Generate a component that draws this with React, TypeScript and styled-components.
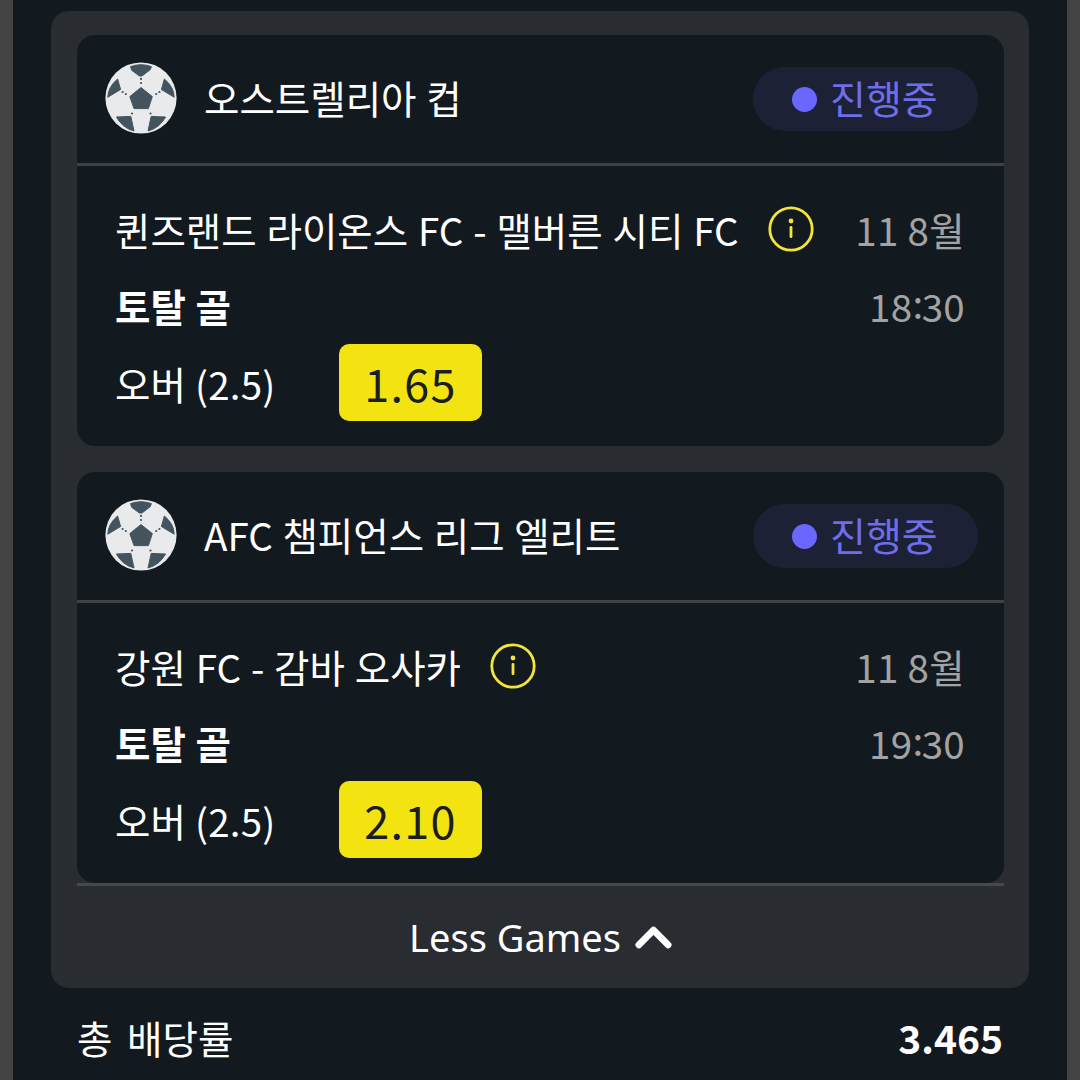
import React from "react";
import styled, { createGlobalStyle } from "styled-components";

const Global = createGlobalStyle`
  html, body { margin: 0; padding: 0; background: #131a1f; }
  body { font-family: "Noto Sans CJK KR", "Noto Sans", sans-serif; font-weight: 400; }
`;

const Page = styled.div`
  width: 1080px;
  height: 1080px;
  box-sizing: border-box;
  overflow: hidden;
  background: #131a1f;
  border-left: 13px solid #434343;
  border-right: 13px solid #434343;
  padding: 11px 38px 0;
`;

const Panel = styled.section`
  background: #292c30;
  border-radius: 18px;
  padding: 24px 25px 0 26px;
  height: 977px;
  box-sizing: border-box;
  display: flex;
  flex-direction: column;
`;

const Card = styled.article`
  background: #131a1f;
  border-radius: 18px;
  height: 411px;
  flex: none;
  display: flex;
  flex-direction: column;
  & + & { margin-top: 26px; }
`;

const CardHead = styled.header`
  height: 131px;
  flex: none;
  box-sizing: border-box;
  display: flex;
  align-items: center;
  padding: 0 26px 0 28px;
  border-bottom: 3px solid #3f4142;
`;

const Ball = styled.svg`
  width: 72px;
  height: 72px;
  flex: none;
  margin-bottom: 2px;
`;

const League = styled.h2`
  margin: 0 0 4px 27px;
  flex: 1;
  font-size: 38.5px;
  font-weight: 400;
  word-spacing: 1px;
  line-height: 56px;
  color: #fff;
  white-space: nowrap;
`;

const Status = styled.div`
  width: 225px;
  height: 64px;
  flex: none;
  border-radius: 32px;
  background: #1c2136;
  display: flex;
  align-items: center;
  padding: 0 0 4px 39px;
  box-sizing: border-box;
  gap: 13px;
  color: #6f6eea;
  font-size: 39px;
`;

const Dot = styled.span`
  width: 25px;
  height: 25px;
  margin-top: 4px;
  border-radius: 50%;
  background: #6a67ff;
`;

const Body = styled.div`
  flex: 1;
  padding: 26px 39px 0 38px;
  display: grid;
  grid-template-columns: 1fr auto;
  grid-template-rows: 74px 78px 77px;
  align-items: center;
`;

const Match = styled.div`
  display: flex;
  align-items: center;
  gap: 29px;
  font-size: 38.5px;
  word-spacing: 1.2px;
  line-height: 56px;
  color: #fff;
  white-space: nowrap;
`;

const Info = styled.svg`
  width: 46px;
  height: 46px;
  flex: none;
`;

const Muted = styled.div`
  font-size: 38.5px;
  letter-spacing: 0.3px;
  color: #a3a3a3;
  text-align: right;
  white-space: nowrap;
  line-height: 56px;
`;

const Colon = styled.span`
  vertical-align: 3px;
  line-height: 0;
  letter-spacing: -1.5px;
`;

const Market = styled.div`
  font-size: 38.5px;
  font-weight: 700;
  word-spacing: 1px;
  color: #fff;
  line-height: 56px;
`;

const OddRow = styled.div`
  display: flex;
  align-items: center;
  grid-column: 1 / span 2;
`;

const Pick = styled.div`
  width: 224px;
  font-size: 38.5px;
  letter-spacing: 0.2px;
  color: #fff;
  line-height: 56px;
`;

const Odd = styled.div`
  width: 143px;
  height: 77px;
  border-radius: 10px;
  background: #f3e411;
  color: #1a1d22;
  font-size: 45px;
  letter-spacing: 1.3px;
  display: flex;
  align-items: center;
  justify-content: center;
`;

const Rule = styled.div`
  height: 3px;
  flex: none;
  background: #46484a;
`;

const More = styled.div`
  flex: 1;
  display: flex;
  align-items: center;
  justify-content: center;
  gap: 14px;
  color: #fff;
  font-size: 38px;
  font-family: "Noto Sans", sans-serif;
`;

const Chevron = styled.svg`
  width: 37px;
  height: 26px;
`;

const Total = styled.footer`
  display: flex;
  justify-content: space-between;
  align-items: center;
  padding: 21px 26px 0 26px;
  color: #fff;
  font-size: 38.5px;
  word-spacing: 6px;
  line-height: 56px;
`;

const TotalValue = styled.strong`
  font-size: 39px;
  font-weight: 700;
`;

const BallIcon = () => (
  <Ball viewBox="0 0 72 72">
    <circle cx="36" cy="36" r="35.6" fill="#e8eaeb" />
    <g fill="#44545e" stroke="#44545e" strokeWidth="1" strokeLinejoin="round">
      <path d="M36 25.5 L47.3 34.6 L43.4 46.6 L29 46.6 L24.8 34.6 Z" />
      <path d="M25.6 4.6 Q36 0.8 46.4 4.6 L45.2 7.7 L37 14 L34.4 14 L26.6 8.2 Z" />
      <path d="M12.6 17 L15.6 27.5 L2.8 35.2 Q3 25 12.6 17 Z" />
      <path d="M59.4 17 L56.4 27.5 L69.2 35.2 Q69 25 59.4 17 Z" />
      <path d="M11.4 55 L25.8 54.4 L29 69 Q17.5 66 11.4 55 Z" />
      <path d="M60.6 55 L46.2 54.4 L43 69 Q54.5 66 60.6 55 Z" />
    </g>
    <g fill="#44545e">
      <circle cx="36" cy="16.9" r="1.1" />
      <circle cx="36" cy="21" r="1.1" />
      <circle cx="17.6" cy="30" r="1.1" />
      <circle cx="20.8" cy="32" r="1.1" />
      <circle cx="54.4" cy="30" r="1.1" />
      <circle cx="51.2" cy="32" r="1.1" />
      <circle cx="27" cy="51.5" r="1.1" />
      <circle cx="45.5" cy="51.5" r="1.1" />
    </g>
  </Ball>
);

const InfoIcon = () => (
  <Info viewBox="0 0 46 46">
    <circle cx="23" cy="23" r="21.2" fill="none" stroke="#f3e43c" strokeWidth="2.8" />
    <circle cx="23" cy="15" r="2.4" fill="#f3e43c" />
    <rect x="21.6" y="20" width="2.8" height="12" rx="1.2" fill="#f3e43c" />
  </Info>
);

type Game = { league: string; match: string; date: string; hour: string; minute: string; odd: string };

const games: Game[] = [
  { league: "오스트렐리아 컵", match: "퀸즈랜드 라이온스 FC - 맬버른 시티 FC", date: "11 8월", hour: "18", minute: "30", odd: "1.65" },
  { league: "AFC 챔피언스 리그 엘리트", match: "강원 FC - 감바 오사카", date: "11 8월", hour: "19", minute: "30", odd: "2.10" },
];

export default function App() {
  return (
    <Page>
      <Global />
      <Panel>
        {games.map((g) => (
          <Card key={g.league}>
            <CardHead>
              <BallIcon />
              <League>{g.league}</League>
              <Status>
                <Dot />
                진행중
              </Status>
            </CardHead>
            <Body>
              <Match>
                {g.match}
                <InfoIcon />
              </Match>
              <Muted>{g.date}</Muted>
              <Market>토탈 골</Market>
              <Muted>
                {g.hour}
                <Colon>:</Colon>
                {g.minute}
              </Muted>
              <OddRow>
                <Pick>오버 (2.5)</Pick>
                <Odd>{g.odd}</Odd>
              </OddRow>
            </Body>
          </Card>
        ))}
        <Rule />
        <More>
          Less Games
          <Chevron viewBox="0 0 38 26">
            <path d="M4 21 L19 6 L34 21" fill="none" stroke="#fff" strokeWidth="7" strokeLinecap="round" strokeLinejoin="round" />
          </Chevron>
        </More>
      </Panel>
      <Total>
        <span>총 배당률</span>
        <TotalValue>3.465</TotalValue>
      </Total>
    </Page>
  );
}
